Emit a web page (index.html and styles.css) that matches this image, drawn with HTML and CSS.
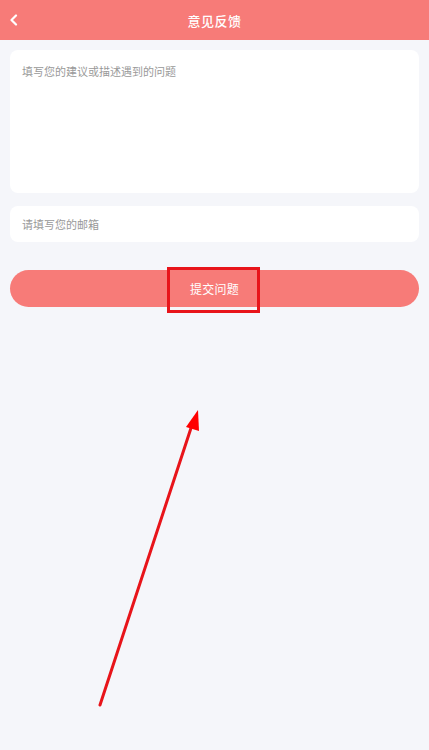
FILE: index.html
```html
<!DOCTYPE html>
<html lang="zh">
<head>
<meta charset="utf-8">
<link rel="stylesheet" href="styles.css">
</head>
<body>
<header class="topbar">
  <svg class="back" width="10" height="12" viewBox="0 0 10 12"><path d="M7 1.5 L2.5 6 L7 10.5" fill="none" stroke="#fff" stroke-width="2.2" stroke-linecap="round" stroke-linejoin="round"/></svg>
  <h1 class="title">意见反馈</h1>
</header>
<main class="content">
  <div class="card textarea">填写您的建议或描述遇到的问题</div>
  <div class="card email">请填写您的邮箱</div>
  <div class="submit">提交问题</div>
</main>
<div class="highlight"></div>
<svg class="arrow" width="429" height="750" viewBox="0 0 429 750">
  <line x1="100" y1="705" x2="192" y2="425" stroke="#e8141a" stroke-width="3" stroke-linecap="round"/>
  <polygon points="198,410 186,427 199,431" fill="#f00"/>
</svg>
</body>
</html>
```
FILE: styles.css
```css
html, body {
  margin: 0;
  padding: 0;
}
body {
  width: 429px;
  height: 750px;
  background: #f5f6fa;
  font-family: "Noto Sans CJK SC", "Noto Sans", sans-serif;
  position: relative;
  overflow: hidden;
}
.topbar {
  height: 40px;
  background: #f77b78;
  display: flex;
  align-items: center;
  justify-content: center;
  position: relative;
}
.back {
  position: absolute;
  left: 9px;
  top: 14px;
}
.title {
  margin: 0;
  color: #fff;
  font-size: 13px;
  font-weight: 500;
  letter-spacing: 0.5px;
}
.content {
  padding: 10px 10px;
  display: flex;
  flex-direction: column;
}
.card {
  background: #fff;
  border-radius: 8px;
  color: #999;
  font-size: 11px;
  padding: 0 12px;
}
.textarea {
  height: 143px;
  padding-top: 13px;
  box-sizing: border-box;
  line-height: 16px;
}
.email {
  margin-top: 13px;
  height: 36px;
  display: flex;
  align-items: center;
}
.submit {
  margin-top: 28px;
  height: 37px;
  border-radius: 19px;
  background: #f77b78;
  color: #fff;
  font-size: 12px;
  display: flex;
  align-items: center;
  justify-content: center;
  letter-spacing: 0.3px;
}
.highlight {
  position: absolute;
  left: 167px;
  top: 267px;
  width: 87px;
  height: 40px;
  border: 3px solid #e8141a;
}
.arrow {
  position: absolute;
  left: 0;
  top: 0;
  pointer-events: none;
}
```
